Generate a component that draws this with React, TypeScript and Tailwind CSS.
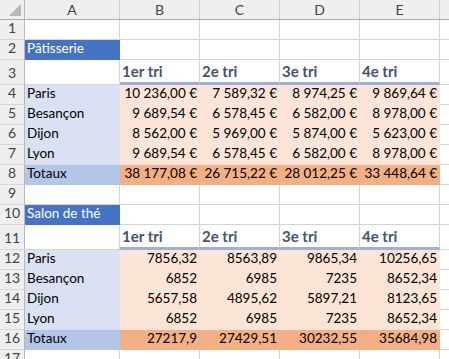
import React from 'react'

type Kind = 'plain' | 'title' | 'city' | 'totalLabel' | 'value' | 'total' | 'head'

interface CellDef {
  text?: string
  kind: Kind
}

const widths = ['w-[95px]', 'w-[80px]', 'w-[80px]', 'w-[80px]', 'w-[80px]']

const kindClass: Record<Kind, string> = {
  plain: 'bg-white border-[#d4d4d4] pb-[1px]',
  title: 'bg-[#4472c4] border-[#4472c4] text-white pb-[1px]',
  city: 'bg-[#d9e1f2] border-[#d9e1f2] text-black pb-[1px]',
  totalLabel: 'bg-[#b4c6e7] border-[#b4c6e7] text-black pb-[1px]',
  value: 'bg-[#fce4d6] border-[#fce4d6] text-black justify-end pb-[1px]',
  total: 'bg-[#f4b084] border-[#f4b084] text-black justify-end pb-[1px]',
  head: 'bg-white border-r-[#d4d4d4] border-b-[3px] border-b-[#9bb1dc] font-bold text-[#44546a] text-[15px] pb-0',
}

const nb = (s: string) => s.replace(/ /g, '\u00a0')

const table1 = [
  ['Paris', '10 236,00 €', '7 589,32 €', '8 974,25 €', '9 869,64 €'],
  ['Besançon', '9 689,54 €', '6 578,45 €', '6 582,00 €', '8 978,00 €'],
  ['Dijon', '8 562,00 €', '5 969,00 €', '5 874,00 €', '5 623,00 €'],
  ['Lyon', '9 689,54 €', '6 578,45 €', '6 582,00 €', '8 978,00 €'],
]
const totals1 = ['Totaux', '38 177,08 €', '26 715,22 €', '28 012,25 €', '33 448,64 €']

const table2 = [
  ['Paris', '7856,32', '8563,89', '9865,34', '10256,65'],
  ['Besançon', '6852', '6985', '7235', '8652,34'],
  ['Dijon', '5657,58', '4895,62', '5897,21', '8123,65'],
  ['Lyon', '6852', '6985', '7235', '8652,34'],
]
const totals2 = ['Totaux', '27217,9', '27429,51', '30232,55', '35684,98']

const blank = (): CellDef[] => Array.from({ length: 5 }, () => ({ kind: 'plain' as Kind }))

function buildRows(): { n: number; tall?: boolean; cells: CellDef[] }[] {
  const rows: { n: number; tall?: boolean; cells: CellDef[] }[] = []
  const section = (start: number, title: string, data: string[][], totals: string[]) => {
    rows.push({ n: start, cells: [{ kind: 'title', text: title }, ...blank().slice(1)] })
    rows.push({
      n: start + 1,
      tall: true,
      cells: [{ kind: 'plain' }, ...['1er tri', '2e tri', '3e tri', '4e tri'].map(t => ({ kind: 'head' as Kind, text: t }))],
    })
    data.forEach((r, i) => {
      rows.push({
        n: start + 2 + i,
        cells: [{ kind: 'city', text: r[0] }, ...r.slice(1).map(v => ({ kind: 'value' as Kind, text: v }))],
      })
    })
    rows.push({
      n: start + 6,
      cells: [{ kind: 'totalLabel', text: totals[0] }, ...totals.slice(1).map(v => ({ kind: 'total' as Kind, text: v }))],
    })
  }
  rows.push({ n: 1, cells: blank() })
  section(2, 'Pâtisserie', table1, totals1)
  rows.push({ n: 9, cells: blank() })
  section(10, 'Salon de thé', table2, totals2)
  rows.push({ n: 17, cells: blank() })
  return rows
}

function RowHead({ n }: { n: number }) {
  return (
    <div className="w-[25px] shrink-0 h-full bg-[#efefef] border-r border-r-[#b8b8b8] border-b border-b-[#d6d6d6] flex items-end pb-[1px] justify-center text-[#444] text-[14px]">
      {n}
    </div>
  )
}

export default function App() {
  const rows = buildRows()
  return (
    <div className="w-[449px] h-[359px] overflow-hidden bg-white text-[13.5px] text-black" style={{ fontFamily: 'Lato, "Open Sans", sans-serif' }}>
      {/* Column headers */}
      <div className="flex h-[20px] bg-[#efefef] border-b border-b-[#ababab]">
        <div className="w-[25px] shrink-0 h-full border-r border-r-[#b8b8b8] relative">
          <svg className="absolute right-[3px] bottom-[3px]" width="12" height="12" viewBox="0 0 12 12">
            <polygon points="12,0 12,12 0,12" fill="#b8b8b8" />
          </svg>
        </div>
        {['A', 'B', 'C', 'D', 'E'].map((c, i) => (
          <div key={c} className={`${widths[i]} shrink-0 h-full border-r border-r-[#d0d0d0] flex items-center justify-center text-[#444] text-[14px]`}>
            {c}
          </div>
        ))}
        <div className="flex-1" />
      </div>

      {rows.map(row => (
        <div key={row.n} className={`flex ${row.tall ? 'h-[25px]' : 'h-[20px]'}`}>
          <RowHead n={row.n} />
          {row.cells.map((cell, i) => (
            <div
              key={i}
              className={`${widths[i]} shrink-0 h-full border-r border-b flex items-end px-[2px] whitespace-nowrap overflow-hidden ${kindClass[cell.kind]}`}
            >
              {cell.text ? nb(cell.text) : null}
            </div>
          ))}
          <div className="flex-1 h-full border-b border-[#d4d4d4]" />
        </div>
      ))}
    </div>
  )
}
